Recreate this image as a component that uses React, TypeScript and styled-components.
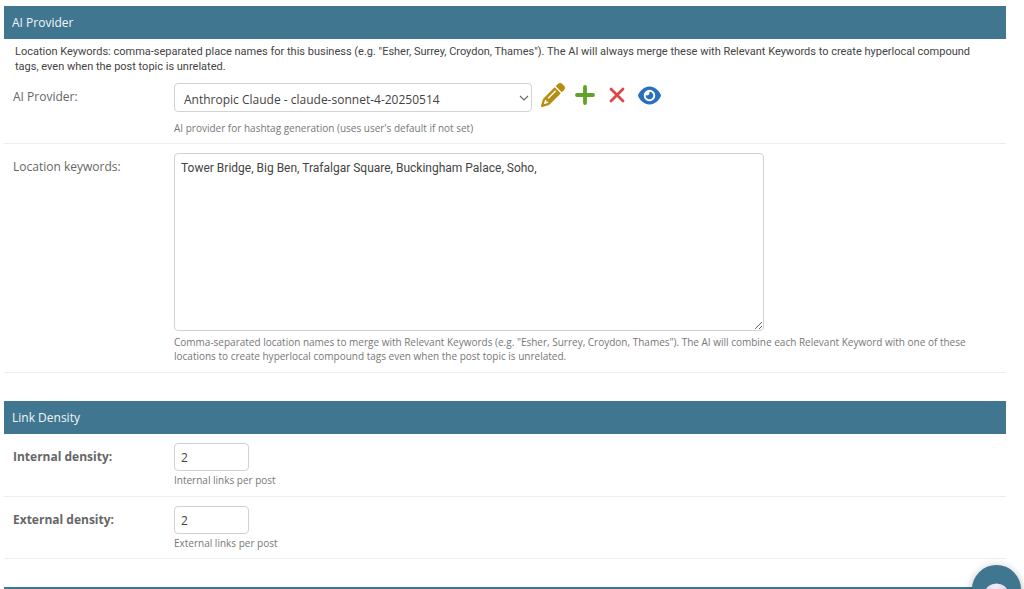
import React from 'react';
import styled, { createGlobalStyle } from 'styled-components';
import { FaEye, FaPencil } from 'react-icons/fa6';

const GlobalStyle = createGlobalStyle`
  *, *::before, *::after { box-sizing: border-box; }
  html, body { height: 100%; overflow: hidden; }
  body {
    margin: 0;
    background: #fff;
    color: #444;
    font-family: "Open Sans", "Noto Sans", sans-serif;
    font-size: 12px;
  }
`;

const Form = styled.form`
  padding: 6px 18px 0 4px;
`;

const Module = styled.section`
  margin-bottom: 28px;
`;

const ModuleTitle = styled.h2`
  margin: 0;
  padding: 1px 8px 0;
  min-height: 33px;
  background: #417690;
  color: #f0f6f8;
  font-size: 12px;
  font-weight: 400;
  line-height: 32px;
`;

const Description = styled.p`
  margin: 0;
  padding: 5px 24px 0 11px;
  font-family: Roboto, "Open Sans", sans-serif;
  font-size: 11px;
  line-height: 15px;
`;

const Row = styled.div<{ $bottom?: number }>`
  display: grid;
  grid-template-columns: 161px minmax(0, 1fr);
  padding: 9px 0 ${p => p.$bottom ?? 8}px 9px;
  border-bottom: 1px solid #eee;
`;

const Label = styled.label<{ $required?: boolean }>`
  padding-top: 6px;
  color: #666;
  line-height: 16px;
  font-weight: ${p => (p.$required ? 700 : 400)};
`;

const Field = styled.div`
  min-width: 0;
`;

const Help = styled.p<{ $gap?: number }>`
  margin: ${p => p.$gap ?? 4}px 0 0;
  max-width: 800px;
  color: #777;
  font-size: 10px;
  line-height: 14px;
`;

const SelectLine = styled.div`
  display: flex;
  align-items: flex-start;
  gap: 9px;
`;

const SelectBox = styled.div`
  display: grid;
  flex: 0 1 358px;
  align-items: center;

  & > * { grid-area: 1 / 1; }
  svg {
    justify-self: end;
    margin-right: 3px;
    pointer-events: none;
  }
`;

const controlStyle = `
  display: block;
  margin: 0;
  border: 1px solid #d2d2d2;
  border-radius: 4px;
  background: #fff;
  color: #444;
  font-family: inherit;
  font-size: 12px;
`;

const Select = styled.select`
  ${controlStyle}
  width: 100%;
  height: 29px;
  padding: 3px 24px 0 9px;
  appearance: none;
`;

const TextArea = styled.textarea`
  ${controlStyle}
  width: 590px;
  max-width: 100%;
  height: 178px;
  padding: 6px;
  font-family: Roboto, "Open Sans", sans-serif;
  line-height: 16px;
  resize: both;
`;

const NumberInput = styled.input`
  ${controlStyle}
  width: 75px;
  height: 28px;
  padding: 1px 6px 0;
  appearance: textfield;
`;

const Actions = styled.div`
  display: flex;
  gap: 8px;
`;

const IconButton = styled.button<{ $color: string }>`
  display: flex;
  align-items: center;
  justify-content: center;
  width: 24px;
  height: 24px;
  padding: 0;
  border: 0;
  background: none;
  color: ${p => p.$color};
  cursor: pointer;
`;

const ChatButton = styled.button`
  position: fixed;
  right: 3px;
  bottom: -25px;
  width: 49px;
  height: 49px;
  padding: 0;
  border: 0;
  border-radius: 50%;
  background: #417690;
  box-shadow: 0 2px 8px rgba(0, 0, 0, 0.3);
  cursor: pointer;

  svg { display: block; }
`;

const PlusIcon = () => (
  <svg width="24" height="24" viewBox="0 0 24 24" aria-hidden="true">
    <path d="M12 4v16M4 12h16" fill="none" stroke="currentColor" strokeWidth="3.8" strokeLinecap="round" />
  </svg>
);

const CrossIcon = () => (
  <svg width="24" height="24" viewBox="0 0 24 24" aria-hidden="true">
    <path d="M6 6l12 12M18 6L6 18" fill="none" stroke="currentColor" strokeWidth="2.8" strokeLinecap="round" />
  </svg>
);

export default function App() {
  return (
    <>
      <GlobalStyle />
      <Form onSubmit={e => e.preventDefault()}>
        <Module>
          <ModuleTitle>AI Provider</ModuleTitle>
          <Description>
            Location Keywords: comma-separated place names for this business (e.g. "Esher, Surrey,
            Croydon, Thames"). The AI will always merge these with Relevant Keywords to create
            hyperlocal compound tags, even when the post topic is unrelated.
          </Description>
          <Row>
            <Label htmlFor="provider">AI Provider:</Label>
            <Field>
              <SelectLine>
                <SelectBox>
                  <Select id="provider" defaultValue="claude">
                    <option value="claude">Anthropic Claude - claude-sonnet-4-20250514</option>
                  </Select>
                  <svg width="10" height="10" viewBox="0 0 10 10" aria-hidden="true">
                    <path d="M1 3l4 4 4-4" fill="none" stroke="#666" strokeWidth="1.1" />
                  </svg>
                </SelectBox>
                <Actions>
                  <IconButton type="button" $color="#b68d10" aria-label="Change provider">
                    <FaPencil size={24} />
                  </IconButton>
                  <IconButton type="button" $color="#5fa225" aria-label="Add provider">
                    <PlusIcon />
                  </IconButton>
                  <IconButton type="button" $color="#dd4646" aria-label="Delete provider">
                    <CrossIcon />
                  </IconButton>
                  <IconButton type="button" $color="#2b70bf" aria-label="View provider">
                    <FaEye size={23} />
                  </IconButton>
                </Actions>
              </SelectLine>
              <Help $gap={9}>AI provider for hashtag generation (uses user's default if not set)</Help>
            </Field>
          </Row>
          <Row $bottom={9}>
            <Label htmlFor="locations">Location keywords:</Label>
            <Field>
              <TextArea
                id="locations"
                defaultValue="Tower Bridge, Big Ben, Trafalgar Square, Buckingham Palace, Soho,"
              />
              <Help>
                Comma-separated location names to merge with Relevant Keywords (e.g. "Esher, Surrey,
                Croydon, Thames"). The AI will combine each Relevant Keyword with one of these
                locations to create hyperlocal compound tags even when the post topic is unrelated.
              </Help>
            </Field>
          </Row>
        </Module>
        <Module>
          <ModuleTitle>Link Density</ModuleTitle>
          <Row $bottom={9}>
            <Label htmlFor="internal" $required>Internal density:</Label>
            <Field>
              <NumberInput id="internal" type="number" defaultValue={2} />
              <Help $gap={2}>Internal links per post</Help>
            </Field>
          </Row>
          <Row>
            <Label htmlFor="external" $required>External density:</Label>
            <Field>
              <NumberInput id="external" type="number" defaultValue={2} />
              <Help $gap={2}>External links per post</Help>
            </Field>
          </Row>
        </Module>
        <Module>
          <ModuleTitle />
        </Module>
      </Form>
      <ChatButton type="button" aria-label="Open assistant">
        <svg width="49" height="49" viewBox="0 0 48 48" aria-hidden="true">
          <defs>
            <linearGradient id="bubble" x1="0" x2="1">
              <stop offset="0" stopColor="#e2d8f0" />
              <stop offset="0.5" stopColor="#f3ecf8" />
              <stop offset="1" stopColor="#ddd0ea" />
            </linearGradient>
          </defs>
          <ellipse cx="24" cy="27" rx="11" ry="9" fill="url(#bubble)" />
        </svg>
      </ChatButton>
    </>
  );
}
